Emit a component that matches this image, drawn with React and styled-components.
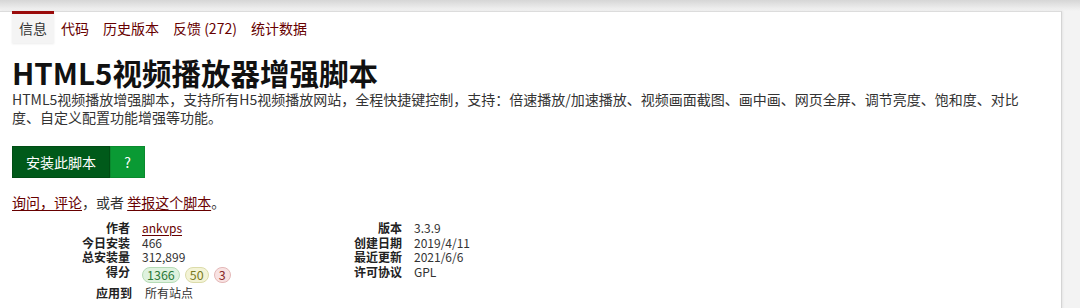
import React from 'react';
import styled, { createGlobalStyle } from 'styled-components';

const GlobalStyle = createGlobalStyle`
  html, body {
    margin: 0;
    padding: 0;
    background: #f3f3f3;
    font-family: "Noto Sans CJK SC", "Noto Sans", sans-serif;
    color: #222;
  }
`;

const Page = styled.div`
  width: 1080px;
  height: 308px;
  overflow: hidden;
  background: linear-gradient(#d6d6d6 0px, #ececec 8px, #f3f3f3 11px);
  padding-top: 11px;
  box-sizing: border-box;
`;

const Card = styled.div`
  width: 1062px;
  height: 320px;
  background: #fff;
  border-top: 1px solid #dcdcdc;
  border-right: 1px solid #d4d4d4;
  box-sizing: border-box;
  padding: 0 12px;
  box-shadow: 1px 0 2px rgba(0, 0, 0, 0.06);
`;

const Tabs = styled.ul`
  display: flex;
  list-style: none;
  margin: -1px 0 0;
  padding: 0;
`;

const Tab = styled.li`
  height: 32px;
  padding: 0 7px 2px;
  display: flex;
  align-items: center;
  font-size: 14px;
  box-sizing: border-box;
  color: ${(p) => (p.$active ? '#333' : '#670000')};
  background: ${(p) => (p.$active ? '#f4f4f4' : 'transparent')};
  border-top: 3px solid ${(p) => (p.$active ? '#9a0b0b' : 'transparent')};
  box-shadow: ${(p) => (p.$active ? '0 1px 2px rgba(0,0,0,0.08)' : 'none')};
`;

const Title = styled.h2`
  margin: 11px 0 0;
  font-size: 29.5px;
  line-height: 36px;
  font-weight: 700;
  color: #111;
`;

const Description = styled.p`
  margin: 0;
  max-width: 1022px;
  font-size: 14px;
  line-height: 18px;
  color: #333;
`;

const InstallArea = styled.div`
  display: flex;
  margin-top: 20px;
`;

const InstallButton = styled.a`
  display: flex;
  align-items: center;
  justify-content: center;
  height: 32px;
  width: ${(p) => (p.$help ? '35px' : '98px')};
  box-sizing: border-box;
  white-space: nowrap;
  background: ${(p) => (p.$help ? '#0a9a34' : '#005a1a')};
  border: 1px solid ${(p) => (p.$help ? '#0a8a2e' : '#004d14')};
  color: #fff;
  font-size: 14px;
  text-decoration: none;
`;

const Feedback = styled.p`
  margin: 14px 0 0;
  font-size: 14px;
  line-height: 20px;
  color: #333;
`;

const Link = styled.a`
  color: #670000;
  text-decoration: underline;
  text-underline-offset: 2px;
`;

const Meta = styled.div`
  display: flex;
  margin-top: 9px;
  font-size: 12px;
`;

const MetaList = styled.dl`
  display: grid;
  grid-template-columns: ${(p) => p.$label} auto;
  column-gap: 12px;
  margin: 0;
  width: ${(p) => p.$width};
  align-content: start;
`;

const Label = styled.dt`
  font-weight: 700;
  text-align: right;
  color: #222;
  line-height: 14.6px;
`;

const Value = styled.dd`
  margin: 0;
  color: #333;
  line-height: 14.6px;
  display: flex;
  gap: 5px;
  align-items: center;
`;

const Badge = styled.span`
  display: inline-block;
  height: 16px;
  line-height: 14px;
  padding: 0 4px;
  border-radius: 8px;
  font-size: 12.5px;
  box-sizing: border-box;
  margin-top: 2px;
  color: ${(p) => p.$fg};
  background: ${(p) => p.$bg};
  border: 1px solid ${(p) => p.$border};
`;

const ApplyRow = styled.div`
  display: grid;
  grid-template-columns: 120px auto;
  column-gap: 13px;
  margin-top: 3px;
  font-size: 12px;
  line-height: 15px;
`;

const tabs = ['信息', '代码', '历史版本', '反馈 (272)', '统计数据'];

export default function App() {
  return (
    <>
      <GlobalStyle />
      <Page>
        <Card>
          <Tabs>
            {tabs.map((t, i) => (
              <Tab key={t} $active={i === 0}>{t}</Tab>
            ))}
          </Tabs>
          <Title>HTML5视频播放器增强脚本</Title>
          <Description>
            HTML5视频播放增强脚本，支持所有H5视频播放网站，全程快捷键控制，支持：倍速播放/加速播放、视频画面截图、画中画、网页全屏、调节亮度、饱和度、对比度、自定义配置功能增强等功能。
          </Description>
          <InstallArea>
            <InstallButton>安装此脚本</InstallButton>
            <InstallButton $help>?</InstallButton>
          </InstallArea>
          <Feedback>
            <Link>询问，评论</Link>，或者 <Link>举报这个脚本</Link>。
          </Feedback>
          <Meta>
            <MetaList $label="118px" $width="284px">
              <Label>作者</Label>
              <Value><Link>ankvps</Link></Value>
              <Label>今日安装</Label>
              <Value>466</Value>
              <Label>总安装量</Label>
              <Value>312,899</Value>
              <Label>得分</Label>
              <Value>
                <Badge $fg="#2c7a3a" $bg="#dff2df" $border="#b6dcb6">1366</Badge>
                <Badge $fg="#7a7a22" $bg="#f3f3d6" $border="#dcdcaa">50</Badge>
                <Badge $fg="#8a2a2a" $bg="#f8e2e2" $border="#e4b8b8">3</Badge>
              </Value>
            </MetaList>
            <MetaList $label="106px" $width="260px">
              <Label>版本</Label>
              <Value>3.3.9</Value>
              <Label>创建日期</Label>
              <Value>2019/4/11</Value>
              <Label>最近更新</Label>
              <Value>2021/6/6</Value>
              <Label>许可协议</Label>
              <Value>GPL</Value>
            </MetaList>
          </Meta>
          <ApplyRow>
            <Label>应用到</Label>
            <Value>所有站点</Value>
          </ApplyRow>
        </Card>
      </Page>
    </>
  );
}
